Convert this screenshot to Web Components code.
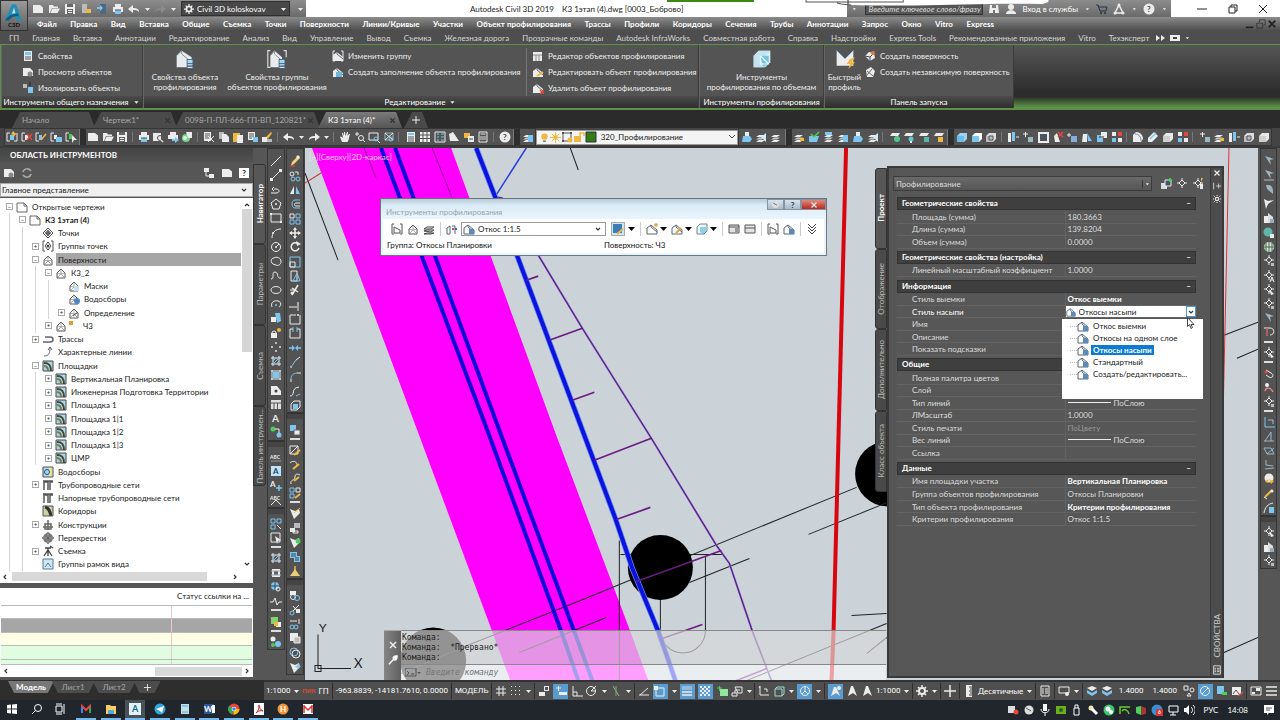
<!DOCTYPE html>
<html lang="ru">
<head>
<meta charset="utf-8">
<title>Autodesk Civil 3D 2019</title>
<style>
html,body{height:100%;margin:0}
body{font:8px/10px Lato,"Noto Sans",sans-serif;color:#eee;background:#2b2b2b;overflow:hidden}
</style>
</head>
<body>
<cad-app></cad-app>
<script>
const W='#ececec',B='#7cc6f0',Y='#f0b840',G='#4ccf5c',R='#e2483c',K='#333',D='#8a8a8a',H='#9fb4c0';
const s=(d,c=W,w=1)=>`<path d="${d}" fill="none" stroke="${c}" stroke-width="${w}"/>`;
const f=(d,c=W)=>`<path d="${d}" fill="${c}"/>`;
const o=(x,y,r,c=W)=>`<circle cx="${x}" cy="${y}" r="${r}" fill="${c}"/>`;
const oc=(x,y,r,c=W,w=1)=>`<circle cx="${x}" cy="${y}" r="${r}" fill="none" stroke="${c}" stroke-width="${w}"/>`;
const t=(x,y,z,v,c=W)=>`<text x="${x}" y="${y}" font-size="${z}" font-weight="700" fill="${c}" font-family="Lato,sans-serif">${v}</text>`;
const layer=f('M1 6l3-2h6L7 6z')+f('M1 8.500l3-2h6l-3 2z','#c9c9c9')+f('M1 11l3-2h6l-3 2z');
const sheet=f('M3 2h8L9 5H1z');
const slope=c=>f('M1 5l4-3 6 5v4H1z',c)+s('M5 2v2l6 5','#667',1);
const br=(c=W)=>s('M3 1H1v10h2M9 1h2v10H9',c);
const surf=s('M2 6l4-4 4 4v5H2z','#555')+s('M6 2v5M2 11l4-4 4 4M2 6l4 1 4-1','#888',.7);
const site=f('M1 1h10v10H1z','#a9d8e6')+s('M1 1h10v10H1z','#444')+s('M2 3c5 0 7 2 7 8','#443',2)+s('M2 6c3 0 4 2 4 5','#775',2);
const cube=(a,b)=>f('M1 5l3-3h7v6l-3 3H1z',a)+f('M1 5h7v6H1z',b);
const snap=f('M2 1l6 9-1-5 4-1z',H);
const osn=s('M6 2l3 3-3 3-3-3z',W)+s('M6 0v2M6 8v2M1 5h2M9 5h2');
const ICON={
new:f('M1 2h7l3 2.500V10H1z'),open:f('M1 2h4l1 1.500h4V5H4L2 10H1z')+f('M4.500 5.500H12L9.500 10H2.500z'),
save:f('M1 1h10v10H1z')+f('M3 1h6v3H3zM3 6h6v5H3z','#666')+f('M4 7h4v1H4zM4 9h4v1H4z'),
open2:f('M2 1h5v9H2z','#bbb')+f('M6 6h5v4H6z',Y),phone:f('M4 1h6v10H4z','#4f6a80')+f('M1 4h3V2l3 3-3 3V6H1z',B),
print:f('M3 1h6v3H3zM1 4h10v5H1z')+f('M3 7h6v4H3z',B)+s('M3 7h6','#555'),
print2:f('M3 1h6v3H3zM1 4h10v4H1z')+f('M5 8h3V6l4 3-4 3v-2H5z',B),
preview:f('M1 2h8v8H1z')+oc(8,7,2.500,'#555')+s('M9 9l2 2','#ddd',1.500),globe:o(5,7,4,'#7bd28b')+f('M5 1h6v6H7z')+o(4,7,2,'#d9f2df'),
cut:f('M1 1h7v9H1z')+s('M2 3h5M2 5h5M2 7h4','#555')+s('M5 5l6 6M11 5l-6 6'),copy:f('M1 1h5v7H1z','#bbb')+f('M4 3h4l3 3v5H4z'),
paste:f('M1 2h7v9H1z',Y)+f('M5 4h6v8H5z'),props:f('M1 1h7v8H1z')+s('M2 3h5M2 5h5M2 7h3','#555')+f('M6 6h5v5H6z',B),
match:f('M5 6l5-5 1 1-4 6z',Y)+f('M1 6h5v5H1z')+f('M6 8h5v3H6z','#bbb'),
undo:f('M0 6l5-4v3c4 0 6 1 6 4-2-2-4-2-6-2v3z'),redo:f('M12 6L7 2v3C3 5 1 6 1 9c2-2 4-2 6-2v3z'),
redo0:f('M12 6L7 2v3C3 5 1 6 1 9c2-2 4-2 6-2v3z',D),
dd:f('M4 5h5L6.500 8z'),ddk:f('M3 4h7L6.500 8z','#000'),
hand:f('M3 11L1 6l1-.5L4 7 3 2h1l1 3V1h1l.5 4L8 1h1L8.500 5 10 3h1L9.500 9l-1 2z'),
zoom:oc(7,7,2.500)+s('M9 9l2 2')+s('M1 3h4M3 1v4'),zwin:s('M1 2h9v7H1z',W,1)+oc(8,8,2,B)+s('M9.500 9.500L12 12',W),
zext:s('M2 2h8v7H2z',H)+s('M2 9l8-7M2 2l8 7')+oc(8,8,2,B),
calc:f('M2 1h8v10H2z')+f('M3 2h6v2H3z',B)+s('M3 6h6M3 8h6M3 10h6','#555',1),calc2:s('M2 1h8v10H2z')+s('M3.500 3h5M3 6h6M3 8h6','#ddd'),
grid:f('M1 1h10v10H1z')+s('M1 4h10M1 7.500h10M4 1v10M8 1v10','#555'),
dash:s('M1 1h10v10H1z')+s('M3 3h2M3 6h2M3 9h2M7 3h3M7 6h3M7 9h3',B),
tag:f('M1 3l4-2 6 9H2z'),lockp:f('M1 2h6v5H1z',Y)+f('M5 5h6v6H5z')+s('M6 8h4','#555'),
help:o(6,6,5.500)+t(4,9,8,'?','#444'),
p1:s('M1 2h3M1 2v8h3M11 2v8H8')+f('M4 4h4v5H4z',B)+f('M7 0l2 2 2 1-2 1-1 2-1-2-2-1 1-1z',Y),
p2:s('M1 2h3M1 2v8h3')+f('M4 4h3v5H4z')+s('M6 3l5 6M11 3L6 9',R,1.500),
p3:s('M1 2h3M1 2v8h3')+f('M4 4h3v5H4z',B)+s('M6 9l5-6',Y,1.500),
p4:s('M1 2h3M1 2v8h3')+f('M4 4h3v4H4z')+f('M6 6h6v5H6z',B),
p5:s('M1 2h3M1 2v8h3')+f('M4 3h3v5H4z',G)+f('M7 4l5 5H9l-2 3z'),
lay:layer,layb:layer+f('M6 4h5v7H6z',B),laym:layer+f('M2 1h7v3H2z',B),layr:layer+f('M6 6l5-4v9z','#cfe9f8'),
layu:f('M2 5h7l2 3-2 3H1z',B)+f('M4 1h4v4H4z',W),layy:layer+f('M7 7h4v3H7z',Y),layg:f('M1 5h10l-2 6H1z',B)+s('M3 3l3 3 5-5',G,1.500),
l1:sheet+o(8,8,3,'#58c48d'),l2:sheet+o(8,8,2.500,'#5ec9d4')+f('M7 10h2v2H7z'),l3:sheet+f('M6 6h5v5H6z','#58b8a0'),l4:sheet+f('M5 6h5v5H5z',Y),
bulb:o(6,5,3.500,Y)+f('M4.500 9h3v2h-3z','#888'),sun:o(6,6,2.500,Y)+s('M6 0v12M0 6h12M2 2l8 8M10 2l-8 8',Y),
frz:s('M2 2h8v8H2z','#555')+f('M1 1h2v2H1zM9 1h2v2H9zM1 9h2v2H1z','#555')+o(9,9,2.500,Y),lck:f('M1 5h7v6H1z',Y)+s('M7 5V2h4v3',Y,1.500),
grn:f('M1 1h10v10H1z','#357a12')+s('M1 1h10v10H1z','#234'),
cb:cube('#9ad4f4','#6ebcea'),cw:cube('#fff','#7cc6f0'),cg:cube('#ddd','#bbb')+s('M4 5h4v4H4z','#556'),cgb:cube('#e8e8e8','#cfcfcf'),
c1:f('M1 2h3v9H1z')+f('M5 1h3v9H5z',B)+s('M9 6h3',W),c2:s('M1 3h5M3.500 1v5')+f('M6 6h5v5H6z','#9bb'),
c3:s('M2 2h9v9H2z',W,2)+f('M4 4h5v5H4z','#456'),c4:f('M2 5l3-3 3 9H3z')+s('M6 1l5 5M11 1L6 6',R,1.500),c5:s('M1 4h4M3 2v4')+f('M5 5h6v6H5z','#8ad'),
c6:f('M2 3h4v8H1z')+f('M6 2l5 8H7z',B),c7:f('M1 4h6v7H1z',B)+f('M5 1h6v6H5z')+s('M3 6h5',K),c8:f('M1 1h4v4H1zM7 7h4v4H7z')+f('M7 1h4v4H7z',R)+f('M1 7h4v4H1z',B),
fil:f('M1 4l3-3c4 0 7 3 7 7l-2 3H1z')+s('M3 3c4 0 6 3 6 7','#789'),cha:f('M1 7l6-6 4 4-6 6H1z')+s('M3 8l6-6',B,1.500),
line:s('M1 11L11 1'),dline:s('M2 10L10 2')+f('M0 9h3v3H0zM9 0h3v3H9z'),pline:s('M1 9h5c4 0 4-4 0-4H4M2 5l2-2M2 5l2 2'),
pent:s('M6 1l5 4-2 6H3L1 5z')+o(6,6,1),rect:s('M1 2h10v8H1z')+f('M0 1h2v2H0zM10 9h2v2h-2z'),arc:s('M2 11C2 6 5 2 11 2')+o(3,6,1),
circ:oc(6,6,4.500)+s('M6 6l3-3')+o(6,6,1),cloud:s('M3 9C0 7 1 3 4 3c2-2 7 0 7 3 0 4-3 5-5 4z'),spl:s('M1 10c4 0 0-7 4-7s1 7 6 6'),ell:`<ellipse cx="6" cy="6" rx="5" ry="3.500" fill="none" stroke="${W}"/>`,
earc:s('M2 9C0 4 5 2 8 3c4 1 3 5 1 6')+o(6,7,1,B),ins:f('M1 5h5v5H1z')+f('M5 1h5l1 8-4 2z',B),blk:f('M1 6h6v5H1z')+oc(4,6,2)+o(9,3,2,Y),
dots:f('M5 1h2v2H5zM1 5h2v2H1zM9 5h2v2H9zM5 9h2v2H5z','#bbb'),hat:s('M1 3h10M1 9h10M3 1v10M9 1v10')+s('M3 9l6-6M3 6l3-3M6 9l3-3',B),
grad:f('M3 3h6v6H3z',B)+s('M1 2h10M1 10h10M2 1v10M10 1v10'),reg:f('M1 2h6l4 5v4H1z')+o(6,7,1.500,'#444'),tab:f('M1 2h10v9H1z','#ddd')+s('M1 5h10M4 5v6M7.500 5v6','#555'),
A:t(2,10,10,'A'),addp:o(3,3,2.500,G)+o(9,9,2.500,B)+s('M5 3h4v4'),
abc:t(0,8,5,'ABC')+s('M1 10h10','#999'),Ab:f('M1 1h10v10H1z','#bfe3f7')+t(3,9,8,'A','#246'),Ap:t(0,8,8,'A')+s('M9 6v6M6 9h6',B,1.500),abc2:t(0,6,5,'ABC')+s('M1 11l5-5 5 5'),
era:f('M2 11l1-4 6-6 2 2-6 6z','#f4d27a')+f('M7 2l2 2 2-2-2-2z')+s('M1 11h5',R),cpo:oc(3,4,2)+oc(4,9,2,B)+oc(9,9,2,B)+s('M6 2h3v3'),
mir:f('M5 2v8H1z')+f('M7 2v8h4z',B),off:s('M11 2H6C2 2 2 10 6 10h5',B)+s('M11 5H7C5 5 5 8 7 8h4'),arr:s('M1 1h4v4H1z',W)+s('M7 1h4v4H7zM1 7h4v4H1z',B)+s('M7 7h4v4H7z',B),
mov:s('M6 1v10M1 6h10',W,1.500)+f('M4 3l2-3 2 3zM4 9l2 3 2-3zM3 4L0 6l3 2zM9 4l3 2-3 2z'),rot:s('M9 3A4 4 0 1 0 10 7',W,1.500)+f('M7 0l5 3-4 2z'),
sca:s('M1 1h10v10H1z',B)+s('M1 6h5v5H1z'),str:s('M2 1h6v10H2z')+s('M4 11L8 3l3 8z',B),trim:s('M3 11L9 1M3 4l6 4',W,1.500)+o(3,9,1.500)+s('M1 6h5',W),ext:s('M0 8h8M9 3v9')+s('M9 3v3','#7cc6f0'),
brk:s('M7 2H1v9h10V2')+o(9,2,1),brk2:s('M4 2H1v9h10V2H8')+s('M4 0v5M8 0v5',B),joi:s('M0 6h5M7 6h5',B,1.500)+f('M3 3l3 3-3 3zM9 3L6 6l3 3z',B),
chf:s('M1 11h2')+s('M2 11l5-7',B)+s('M7 4l4-3'),flt:s('M2 11V8')+s('M2 8c0-4 3-6 6-6',B)+s('M8 2h4'),bld:s('M1 11c6 0 0-8 9-9')+s('M7 11l4-2',B),exp:s('M2 5l3-3h6v6l-3 3H2z',W)+f('M4 5h5v5H4z',B),
ord:f('M1 1h6v6H1z',B)+f('M5 6h6v5H5z')+s('M5 6h6v5H5z','#666'),eh:s('M1 2h8v8H1zM1 10l8-8')+s('M5 11l6-5',Y,2),ep:s('M1 5c4-4 9 0 6 4')+s('M4 11l6-5',Y,2),es:s('M2 11C1 6 6 8 6 4s3-3 5-2')+s('M5 8l5-4',Y,2),ea:s('M1 1h4v4H1zM1 7h4v4H1z',B)+s('M7 1h4v4H7z')+s('M6 11l5-4',Y,2),
tg:f('M1 2l5 2 4-2 1 4-6 6z')+s('M5 6l6-5',Y),tgg:f('M1 2l5 2 4-2 1 4-6 6z')+o(9,5,2.500,G),tgb:f('M1 2l5 2 4-2 1 4-6 6z')+s('M9 3v5M6.500 5.500h5',B,1.500),
blo:f('M1 6h5v4H1z')+f('M5 1h6v5H5z','#bbb')+s('M4 9h5v2H4z'),syn:f('M1 1h7v6H1z',B)+f('M5 5h6v6H5z',B)+s('M2 3h5M2 5h5M6 7h4M6 9h4','#345'),brm:s('M6 1v5',Y,1.500)+f('M6 4l5 7H1z','#e8cd7a'),
lnk:f('M1 2h6v4H1z')+oc(4,8,2.500)+oc(8,9,2.500,B),lnc:oc(3,9,2,B)+s('M4 7l6-6M4 2l5 6')+f('M7 5h4v4H7z'),par:s('M1 3h7M10 1v5')+oc(3,9,2,B)+oc(7,9,2,B),pas:f('M1 1h8v8H1z')+f('M5 5h6v6H5z','#bbb')+s('M5 5h6v6H5z'),web:oc(5,5,4,B)+oc(7,7,4),
sel:s('M1 1h9v9H1z',W)+f('M5 4l6 4-3 1-1 3z'),gr2:s('M1 1h4v4H1zM7 1h4v4H7zM1 7h4v4H1z',B)+s('M7 7l4 4'),chip:f('M2 2h8v8H2z')+f('M4 4h4v4H4z','#567')+s('M1 4h10M1 8h10','#aaa'),mapz:o(5,5,4,B)+s('M1 5h8M5 1v8','#345')+oc(8,8,2),pul:s('M0 7h3l2-4 2 7 2-3h3'),gsq:f('M1 1h7v7H1z','#7fd36a')+f('M6 6h5v5H6z')+f('M4 6h4v4H4z',Y),dotc:o(3,3,2.500)+o(8,8,3,B)+o(3,9,2,G),
sn1:snap,sn2:snap+s('M1 11h10','#bbb'),sn3:f('M3 1h3c4 1 4 5 4 9L4 5z',H),sn4:f('M1 1l4 2 6-1-6 4-2 5z'),bld1:f('M1 4h5v7H1z')+f('M5 1l5 4v6H5z','#ddd')+f('M7 7h4v4H7z','#9ab'),sph:o(5,5,4.500,'#5fb6a8')+f('M7 7h4v4H7z'),gl:o(6,6,5,'#d9e6c6')+s('M1 6h10M6 1v10M3 2v8M9 2v8','#466'),
os:osn+f('M8 8h3v3H8z','#bbb'),osa:osn+s('M7 12l2-5 2 5M8 10h2'),osk:osn+f('M6 5l5 5-3 1z'),pkr:s('M1 1h6c5 0 5 7 0 7')+s('M4 1v8','#c66',1.500),mag:s('M3 3l5 3c4 2 1 6-2 4L3 8')+o(3,5,1.500,R),mag2:o(4,3,2)+s('M2 9c1-4 6-4 8 1','#d88',1.500),
ax:s('M2 1v10h10',B)+s('M5 4h5v4','#9bd'),ax2:s('M2 11L8 2M1 11h10',H)+s('M8 2v9','#9bd'),hb:s('M1 3h7l3 6H4z',H)+s('M4 9l7-6',B),dl:s('M3 1v5l7 1M2 10l9-1',H),ball:o(6,5,4.500)+f('M6 6l5 2-3 3z',Y)+o(4,8,1.500,Y),wr:s('M2 9l7-7',Y,2)+o(9,3,1.500)+s('M1 9l3 2'),arcb:s('M1 11C2 5 5 2 10 1')+f('M6 5h5v6H6z',B),
prj:f('M2 1h8v10H2z')+f('M3 2h6v3H3z',B)+s('M3 7h6M3 9h6','#555'),vie:f('M1 2h7l3 3v5H1z')+o(8,8,2.500,'#888'),iso:f('M1 2h4v4H1z','#bbb')+f('M6 5h5v6H6z',B)+s('M8 0v4',K,1.500),
G1:f('M1 4l3-3 6 4v6H1z','#e9ecee')+s('M1 4l3-3v2l6 5','#8a949c',.6)+f('M7 6h4v6H7z','#3f607c')+f('M7.500 6.500h3v2h-3z','#a8d8f0')+s('M7.500 9.500h3M7.500 11h3','#fff',.6),
G2:s('M2 1H0.500v10H2M10 1h1.500v4','#ddd',.7)+f('M2 4l2.500-3L9 5v6H2z','#e9ecee')+s('M2 4l2.500-3v2L9 7','#8a949c',.6)+f('M7 6h4v6H7z','#3f607c')+f('M7.500 6.500h3v2h-3z','#a8d8f0')+s('M7.500 9.500h3M7.500 11h3','#fff',.6),
cub:f('M1 4l3-3h7v7l-3 3H1z','#d9eef5')+f('M1 4l3-3h7l-4 4 0 6H1z','#c3e4ee')+f('M5 4h5v5L7 11z','#74c3e0')+s('M5 4l5 5M5 4v5h5','#e9f7fc',.7),
prf:f('M1 1l5 5 5-5v9H1z')+s('M1 1l5 5 5-5','#9bc7da',.6)+f('M9 6l3-1-2 3h2l-4 4 1-3H7z',Y),gb:br()+slope(W),gfill:slope(W)+f('M4 6h6v5H4z','#6fb7df'),
ged:f('M1 2h9v9H1z')+s('M1 5h9M4 5v6M7 5v6','#888'),gp:slope(W)+s('M5 10l6-4',Y,2),gx:slope(W)+s('M8 8l4 4M12 8l-4 4',R,1.500),
sf:f('M1 6l4-4 5 1 1 5-5 3z')+s('M1 6l5 1 4-4M6 7v4','#444')+o(9,3,2,'#e8743a'),sf2:f('M2 4l5-3 4 4-2 6H3z')+s('M3 5l6 5M8 3L3 9','#666'),
chev:f('M1 3l4 3-4 3zM6 3l4 3-4 3z'),cam:f('M1 3h10v6H1z')+f('M4 5h4v2H4z','#444'),
gear:oc(6,6,3,W,2)+s('M6 0v3M6 9v3M0 6h3M9 6h3M2 2l2 2M8 8l2 2M10 2L8 4M4 8l-2 2',W,1.500),
bin:f('M2 2h2v3h4V2h2l1 8H7V7H5v3H1z'),usr:o(6,4,3)+f('M1 11c0-5 10-5 10 0z'),cart:s('M0 2h2l2 6h6l1-4H3','#234')+o(5,10,1,'#234')+o(9,10,1,'#234'),tri:s('M6 2l4 8H2z',W,1.500)+o(6,2,1.500)+o(2,10,1.500)+o(10,10,1.500),
mn:s('M1 6h10','#222'),mx:s('M2 4h6v6H2zM4 4V2h6v6H8','#222'),cl:s('M2 2l8 8M10 2l-8 8','#222'),
mnw:s('M1 10h9','#222',2),mxw:s('M1 5h7v6H1zM4 4V1h7v6H9',K),clk:s('M2 2l8 8M10 2l-8 8','#222',2),x:s('M3 3l6 6M9 3l-6 6',W,1.500),xd:s('M3 3l6 6M9 3l-6 6','#333',1.500),
pin:s('M2 2v8M5 6h6M8 3v6','#ddd'),set:oc(6,6,2,'#ddd',1.500)+s('M2 2l2 2M10 2L8 4M2 10l2-2M10 10L8 8M2 5v2M10 5v2M5 2h2M5 10h2','#ccc'),
pg:f('M1 2h7l3 3v6H1z','#fff')+s('M1 2h7l3 3v6H1zM8 2v3h3','#666'),pt:s('M6 1l5 5-5 5-5-5z','#555')+s('M6 3v6M3 6h6','#333')+oc(6,6,2,'#555'),ptg:br('#555')+s('M6 2l3 4-3 4-3-4z','#555')+o(6,6,1.500,'#444'),
srf:surf,msk:surf+f('M6 6h5v5H6z','#c6e2ee'),wsh:surf+o(9,8,3,'#4a86c8'),def:surf+s('M5 9l5-4','#555'),trs:s('M1 9h7c4 0 4-5 0-5H3','#667',1.500),chl:s('M2 10c5 0 6-3 6-8M6 4l2-3 2 3','#666'),ste:site,
wat:f('M1 1h10v10H1z','#e8e0a0')+f('M1 1h6v10H1z','#a9d8ee')+s('M1 1h10v10H1z','#555')+oc(5,6,2.500,'#357'),pip:s('M2 11V3h4v8M8 11V3h3M1 2h10','#555',1.500),cor:f('M1 1h10v10H1z','#cfcf9f')+s('M3 2c4 1 5 4 6 9','#333',3)+s('M1 1h10v10H1z','#555'),
asm:s('M1 8h10M6 1v10M3 5h6v5H3z','#666',1.500),crs:o(6,6,5,'#777')+s('M6 0v12M0 6h12','#ddd',2)+s('M6 0v12M0 6h12','#333'),svy:s('M2 11l4-6 4 6M3 3h6M6 3v8M8 1l3 2','#444',1.300),vfr:f('M1 1h10v10H1z','#cfeaf5')+s('M1 1h10v10H1zM3 9l3-4 3 4','#579'),
ref:s('M2 5c1-4 6-4 8-1M10 7c-1 4-6 4-8 1','#aaa',1.500),hie:f('M1 1h5v4H1zM6 7h5v4H6z')+s('M3 5v4h3'),
bsl:slope('#fff')+s('M1 5l4-3 6 5v4H1z','#567')+f('M6 6h5v5H6z','#5b8cb8'),bgr:br('#555')+s('M3 4l6 3v3H3z','#555'),bly:s('M1 6l3-2h7l-3 2zM1 8l3-1h7l-3 2zM1 11l3-1h7l-3 1z','#444'),bst:s('M1 5l3-2v8H1zM6 3h3v8','#567')+f('M6 5h2v2H6z',R)+f('M9 5h2v2H9z','#36c'),
bcr:slope('#fff')+s('M1 5l4-3 6 5v4H1z','#567')+o(10,2,1.800,'#e8a03a'),bed:slope('#fff')+s('M1 5l4-3 6 5v4H1z','#567')+s('M5 10l5-5','#d9a63a',2),bsel:f('M1 1h9v9H1z','#3c7fb6')+s('M5 11l6-5',Y,2),
bcub:f('M1 4l3-3h7v7l-3 3H1z','#eef6f9')+f('M4 4h6v5l-3 2-3-2z','#8fd0e8')+s('M1 4l3-3h7v7l-3 3H1z','#567',.8),
bta:f('M1 2h10v8H1z','#e4e4e4')+s('M1 2h10v8H1zM1 4h10','#555')+f('M7 5h3v4H7z','#999'),btb:f('M1 2h10v8H1z','#e4e4e4')+s('M1 2h10v8H1zM1 5h10','#555'),bcol:s('M2 1l4 4 4-4M2 4l4 4 4-4M2 7l4 4 4-4','#444'),
qs:f('M1 5h6v6H1z','#ddd')+f('M5 2h6v6H5z','#456')+s('M5 2h6v6H5z')+s('M10 0v4M8 2h4',G,1.500),qa:osn,qf:osn+f('M8 6h3v5H8z')+f('M9 0h2L9 4z',Y),
msn:f('M6 1h5v5H6zM1 7h6v4H1z')+f('M7 2h3v3H7z','#555'),dyn:s('M1 3h5M3.500 1v5')+f('M4 7h8v3H4z'),ort:s('M2 1v10h10M2 7h4v4'),pol:oc(5,6,4.500)+s('M5 6h4M5 6l5-5'),iso2:s('M3 1l6 10','#9a9')+s('M6 1v10','#7a7'),otr:s('M2 10l8-7M1 10h10'),osnp:s('M2 3h8v8H2z')+f('M0 1h4v4H0z',W),lw:s('M1 2h10M1 4h10',W,.8)+s('M1 7h10M1 10h10',W,1.500),
trn:f('M1 1h10v10H1z')+f('M3 1h2v2H3zM7 1h2v2H7zM1 3h2v2H1zM5 3h2v2H5zM9 3h2v2H9zM3 5h2v2H3zM7 5h2v2H7zM1 7h2v2H1zM5 7h2v2H5zM9 7h2v2H9zM3 9h2v2H3zM7 9h2v2H7z','#5a9bd0'),selc:f('M4 4h8v7H4z','#8ee6a0')+s('M1 3h5M3.500 1v5',G),sc3:s('M4 2h7v6H7zM1 8h5v3H1zM4 8V5h5'),
ducs:s('M2 1v9h9M2 1L1 3M6 4h3v3'),fltr:s('M2 4l2-2h7v7l-2 2H2zM2 4h7v7','#9fd8d0'),giz:oc(6,6,4.500)+s('M6 2v4l3 3M6 6L3 9'),ann:f('M5 1h2l4 10-4-3-5 3z'),anp:f('M4 2h2l4 9-4-3-5 3z')+o(9,3,2),
gdots:f('M1 1h1v1H1zM5 1h1v1H5zM9 1h1v1H9zM1 5h1v1H1zM5 5h1v1H5zM9 5h1v1H9zM1 9h1v1H1zM5 9h1v1H5zM9 9h1v1H9z','#fff'),gline:s('M4 1v10M8 1v10M1 4h10M1 8h10'),
plus:s('M6 0v12M0 6h12',W,1.500),rul:f('M3 0h6v12H3z')+s('M6 2h3M7 4h2M6 6h3M7 8h2M6 10h3','#444'),qp:s('M2 1h8v10H2z')+s('M3 4h2M3 6h2M3 8h2M6 4h3M6 6h3M6 8h3'),lkui:s('M1 2h10v6H1z')+o(9,9,2),el:f('M1 3l5-2 5 2-5 3z')+f('M1 5l5 3 5-3v3l-5 3-5-3z',B),iso3:s('M1 1h4v4H1z')+oc(9,5,2)+s('M4 11l2-3 2 3z'),hw:oc(6,6,4.500)+s('M3 9l6-6'),gs:f('M1 1h7v8H1z',B)+f('M6 7h5v3H6z',G),pic:f('M1 2h9v8H1z')+s('M2 9l3-4 3 4','#555')+s('M7 11l5-4',R,1.500),full:s('M1 2h10v8H1z')+f('M6 3h4v3H6zM2 7h3v2H2z'),burg:s('M1 2h11M1 6h11M1 10h11',W,1.500),
win:f('M1 2l4-.5V5.500H1zM6 1.400L11 1v4.500H6zM1 6.500h4v4L1 10zM6 6.500h5V11l-5-.5z','#fff'),mgl:oc(7,5,3.500,'#fff')+s('M4.500 7.500L1 11','#fff'),tv:s('M1 3h6v6H1zM9 1v10M1 1h6M1 11h6','#fff'),gm:s('M2 10V3l4 4 4-4v7','#ea4335',2)+s('M2 10V4','#4285f4',2)+s('M10 10V4','#34a853',2),fld:f('M1 2h4l1 1h5v8H1z','#f5cf62')+f('M3 7h6v4H3z','#5aa7dc'),acad:f('M0 0h12v12H0z','#e4f1f6')+t(3,9,9,'A','#0d6c8c'),
tgm:o(6,6,5.500,'#2fa5de')+f('M2 6l8-3-2 7-2-2z','#fff'),pc:f('M2 1h8v10H2z','#bfe0f2')+s('M3 3h6M3 9h6','#6aa'),wrd:f('M1 1h10v10H1z','#2b579a')+t(1,9,8,'W','#fff')+f('M9 2h3v8H9z','#fff'),chr:o(6,6,5.500,'#e8453c')+f('M6 6L1 3a5.500 5.500 0 0 0 3 8.500z','#34a853')+f('M6 6h5.500a5.500 5.500 0 0 1-6 5.500z','#fbbc05')+o(6,6,2.300,'#fff')+o(6,6,1.800,'#4285f4'),pdf:f('M1 0h10v12H1z','#fff')+s('M3 10c3-3 3-5 3-8 0 3 2 5 4 6-3-1-5 0-7 2','#c8232c'),hrt:o(6,6,5.500,'#e9963c')+t(3,9,8,'H','#fff'),ml:f('M1 1h10v10H1z','#fff')+s('M2 3l4 4 4-4M2 2v8M10 2v8','#d33',1.500),
tr1:f('M1 2h7v7H1z','#ddd')+o(9,8,2.500,R),tr2:o(6,6,4.500,'#ddd')+s('M3 4l5 3','#555'),mic:f('M4 0h4v7H4z','#fff')+s('M2 5c0 5 8 5 8 0M6 9v3','#fff'),nv:f('M1 2h10v8H1z','#6fae1b')+o(6,6,2,'#263'),usb:s('M3 4h5v7H3zM4 4V1h3v3','#fff'),key:o(4,4,2.500,'#f4e6b0')+s('M5 5l5 5','#fff',3),wa:o(6,6,5.500,'#3bc76b')+o(5,5,2.500,'#fff')+o(8,8,2,'#fff'),nv2:s('M1 10V3h10M3 7c2-3 6-1 7 3','#6c3',1.500),cub2:f('M1 3l5-1v9L1 9z',G)+f('M6 2l5 2v6l-5 1z','#a33'),six:o(6,6,5.500,'#3a8fd0')+f('M5 5h7v7H5z','#d33')+t(7,10,5,'6','#fff'),mon:s('M2 2h9v6H2zM6 8v3M3 11h6','#fff'),vol:f('M1 4h2l3-3v10L3 8H1z','#fff')+s('M8 3c2 2 2 4 0 6M10 1c3 3 3 7 0 10','#fff'),ntf:f('M1 1h10v8H6l-2 2V9H1z','#fff')+s('M3 4h6M3 6h4','#555')
};
const reg=(name,css,html)=>customElements.define(name,class extends HTMLElement{
  constructor(){super();this.attachShadow({mode:'open'}).innerHTML=`<style>*,*::before{box-sizing:border-box}button,select,input{font:inherit;color:inherit;background:none;border:0;padding:0;margin:0;border-radius:0;appearance:none;outline:0;text-align:left;white-space:nowrap}a{color:inherit;text-decoration:none;white-space:nowrap}button{display:flex;align-items:center;justify-content:center}${css}</style>${html}`}
});
customElements.define('ui-icon',class extends HTMLElement{
  connectedCallback(){if(this.shadowRoot)return;this.attachShadow({mode:'open'}).innerHTML=`<style>:host{display:block;flex:none;width:var(--s,12px);height:var(--s,12px)}svg{display:block;width:100%;height:100%}</style><svg viewBox="0 0 12 12" aria-hidden="true">${ICON[this.getAttribute('name')]||''}</svg>`}
});
const ic=(n,z)=>`<ui-icon name="${n}"${z?` style="--s:${z}px"`:''}></ui-icon>`;
const ib=(n,c='')=>`<button class="${c}" aria-label="${n}">${ic(n)}</button>`;

/* A strip of tool groups: "|" is a rule, "/" starts a new docked toolbar. */
customElements.define('tool-strip',class extends HTMLElement{
  connectedCallback(){
    if(this.shadowRoot)return;
    const html=this.getAttribute('icons').trim().split(/\s+/).map(n=>n==='|'?'<i></i>':n==='/'?'<b></b>':n==='dd'?`<button class="dd" aria-label="dd">${ic('dd')}</button>`:ib(n)).join('');
    this.attachShadow({mode:'open'}).innerHTML=`<style>:host{display:flex;box-sizing:border-box;min-width:0;min-height:0;background:#535353;border:1px solid #363636}
    :host([vertical]){flex-direction:column;padding:5px 0 0}
    button{all:unset;flex:10 1 0;min-width:0;min-height:0;display:flex;align-items:center;justify-content:center}.dd{flex-grow:7}
    i,b{box-sizing:border-box}i{flex:0 0 5px;border-left:1px solid #777;margin:3px 0 3px 2px}b{flex:0 0 7px;background:#2e2e2e;border-left:1px solid #777;margin-left:1px}
    :host([vertical]) i{flex-basis:2px;margin:1px 3px 3px;border:0;background:#ddd}:host([vertical]) b{flex-basis:7px;margin:0 0 3px;border:0;border-top:2px solid #333;background:#444}</style>${html}`;
  }
});

reg('title-bar',`:host{display:flex;height:17px;align-items:stretch;background:#fff;color:#222;position:relative;overflow:hidden}
.quick{display:flex;align-items:center;background:linear-gradient(#8d8d8d,#6a6a6a);color:#fff;flex:0 0 278px;gap:4px;padding-left:4px}
.quick .dd{margin:0 -3px}
.ws{display:flex;align-items:center;gap:3px;flex:1;height:15px;background:#484848;border:1px solid #2f2f2f;padding-left:2px;margin-left:1px}
.ws select{flex:1;color:#fff}
.name{flex:1;text-align:center;align-self:center;white-space:pre}
.info{flex:0 0 298px;display:flex;align-items:center;gap:5px;background:linear-gradient(#8d8d8d,#6a6a6a);color:#fff;padding:0 3px}
.info input{width:118px;height:12px;background:#555;border:1px solid #333;padding-left:2px;color:#ddd;font-style:italic;margin-left:2px}
.win{flex:0 0 109px;display:flex;align-items:center;justify-content:space-between;padding:0 11px 0 25px}
.cover{position:absolute;left:60%;top:0;width:24%;height:7px}
.strip{position:absolute;left:51%;top:0;width:7%;height:2px;background:#3d8a12}`,
`<div class="quick">${['new','open','save','open2','phone','print','undo'].map(n=>ib(n)).join('')}${ib('dd','dd')}${ib('redo0')}${ib('dd','dd')}
<label class="ws">${ic('gear',10)}<select aria-label="Рабочее пространство"><option>Civil 3D koloskovav</option></select>${ic('dd')}</label>${ic('dd')}</div>
<div class="name">Autodesk Civil 3D 2019    К3 1этап (4).dwg [0003_Боброво]</div>
<div class="info">${ic('dd',8)}<input aria-label="Поиск" value="Введите ключевое слово/фразу">${ib('bin')}${ib('usr')}<button>Вход в службы</button>${ic('dd',8)}${ib('cart')}${ib('tri')}${ic('dd',8)}${ib('help')}${ic('dd',8)}</div>
<div class="win">${ib('mn')}${ib('mx')}${ib('cl')}</div>
<i class="strip"></i><svg class="cover" viewBox="0 0 300 7" preserveAspectRatio="none"><path d="M70 0H269v2l-6 2c-80-1-120 3-193 1z" fill="#fff"/><path d="M27 0v2h97V0M58 3l4 1 10 1" fill="none" stroke="#555"/></svg>`);

reg('menu-bar',`:host{display:flex;height:14px;align-items:center;background:linear-gradient(#8b8b8b,#4b4b4b);color:#fff;font-weight:700;padding:0 3px 0 9px}
nav{flex:954;display:flex;justify-content:space-between}.sp{flex:250}.w{display:flex;gap:1px;flex:none}`,
`<nav>${'Файл,Правка,Вид,Вставка,Общие,Съемка,Точки,Поверхности,Линии/Кривые,Участки,Объект профилирования,Трассы,Профили,Коридоры,Сечения,Трубы,Аннотации,Запрос,Окно,Vitro,Express'.split(',').map(x=>`<a href="#">${x}</a>`).join('')}</nav><span class="sp"></span><div class="w">${ic('mnw',10)}${ic('mxw',10)}${ic('clk',10)}</div>`);

const small=(i,x)=>`<button class="s">${ic(i)}<span>${x}</span></button>`;
reg('cad-ribbon',`:host{display:block}
nav{display:flex;align-items:center;height:13px;background:#4e4e4e;color:#d6d6d6;padding-left:9px}
nav div{flex:1145;display:flex;justify-content:space-between}nav span{flex:126;display:flex;align-items:center;gap:2px;padding-left:5px}
.body{display:flex;height:66px;border:1px solid #5f8f4a;border-width:1px 0 2px 1px;background:linear-gradient(#565656,#2c2c2c 75%,#2c2c2c 82%,#5f9a48)}
section{display:flex;flex-direction:column;background:#545454;border-right:1px solid #3c3c3c;border-left:1px solid #666}
h2{margin:0;font:inherit;color:#fff;flex:0 0 12px;display:flex;align-items:center;justify-content:center;background:linear-gradient(#4c4c4c,#2e2e2e);white-space:nowrap}
.c{flex:1;min-height:0;display:flex;padding-top:3px}.col{display:flex;flex-direction:column}.s{height:16px;flex:none;gap:4px;justify-content:flex-start}
.big{flex-direction:column;justify-content:flex-start;text-align:center;gap:3px;white-space:pre}
.big ui-icon{margin-top:1px}
.p1{flex:0 0 142px}.p1 .col{padding-left:20px}.p2{flex:0 0 556px}.p3{flex:0 0 125px}.p4{flex:0 0 190px}.v{border-left:1px solid #777;padding-left:5px}`,
`<nav><div>${'ГП,Главная,Вставка,Аннотации,Редактирование,Анализ,Вид,Управление,Вывод,Съемка,Железная дорога,Прозрачные команды,Autodesk InfraWorks,Совместная работа,Справка,Надстройки,Express Tools,Рекомендованные приложения,Vitro,Техэксперт'.split(',').map(x=>`<a href="#">${x}</a>`).join('')}</div><span>${ib('chev')}${ib('cam')}${ic('dd',8)}</span></nav>
<div class="body">
<section class="p1"><div class="c"><div class="col">${small('prj','Свойства')}${small('vie','Просмотр объектов')}${small('iso','Изолировать объекты')}</div></div><h2>Инструменты общего назначения&nbsp;${ic('dd',10)}</h2></section>
<section class="p2"><div class="c"><button class="big" style="flex:0 0 82px">${ic('G1',20)}Свойства объекта\nпрофилирования</button><button class="big" style="flex:0 0 102px">${ic('G2',20)}Свойства группы\nобъектов профилирования</button><div class="col" style="flex:1;padding-left:4px">${small('gb','Изменить группу')}${small('gfill','Создать заполнение объекта профилирования')}</div><div class="col v" style="flex:0 0 172px">${small('ged','Редактор объектов профилирования')}${small('gp','Редактировать объект профилирования')}${small('gx','Удалить объект профилирования')}</div></div><h2>Редактирование&nbsp;${ic('dd',10)}</h2></section>
<section class="p3"><div class="c"><button class="big" style="flex:1">${ic('cub',20)}Инструменты\nпрофилирования по объемам</button></div><h2>Инструменты профилирования</h2></section>
<section class="p4"><div class="c"><button class="big" style="flex:0 0 39px">${ic('prf',20)}Быстрый\nпрофиль</button><div class="col">${small('sf','Создать поверхность')}${small('sf2','Создать независимую поверхность')}</div></div><h2>Панель запуска</h2></section>
</div>`);

reg('doc-tabs',`:host{display:flex;height:18px;background:#2b2b2b;padding:2px 0 0 12px;color:#a8a8a8}
button{background:#4a4a4a;clip-path:polygon(8px 0,calc(100% - 6px) 0,100% 100%,0 100%);justify-content:space-between;padding:0 5px 0 10px;margin-right:-2px}
.on{background:linear-gradient(#7a7a7a,#555);color:#fff}.n{padding:0 8px;margin-left:4px}`,
`<button style="flex:0 0 83px"><span>Начало</span></button><button style="flex:0 0 84px"><span>Чертеж1*</span>${ic('xd',9)}</button><button style="flex:0 0 138px"><span>0098-П-ПЛ-666-ГП-ВП_120821*</span>${ic('xd',9)}</button><button class="on" style="flex:0 0 84px"><span>К3 1этап (4)*</span>${ic('xd',9)}</button><button class="n" aria-label="Новый чертеж">${ic('plus',8)}</button>`);

reg('main-tools',`:host{display:flex;height:20px;align-items:center;background:#444;padding:0 8px 0 4px;border-bottom:2px solid #3a3a3a}
tool-strip{height:18px}.a{flex:531 1 0}.b{flex:533 1 0}
label{flex:199 1 0;display:flex;align-items:center;height:15px;background:#f4f4f4;border:1px solid #999;color:#222;padding-left:2px}select{flex:1;padding-left:4px}svg{width:10px}`,
`<tool-strip class="a" icons="p1 p2 p3 p4 p5 / new open save | print preview print2 globe | cut copy paste props match | undo dd redo dd | hand zoom zwin zext | calc grid dash tag lockp calc2 | help / layb"></tool-strip>
<label>${ic('bulb',11)}${ic('sun',11)}${ic('frz')}${ic('lck')}${ic('grn')}<select aria-label="Слой"><option>320_Профилирование</option></select><svg viewBox="0 0 10 6"><path d="M2 1l3 3 3-3" fill="none" stroke="#444"/></svg></label>
<tool-strip class="b" icons="layu layr lay / layy layg laym layb layu layr | l1 l2 l3 l4 / cb cw cg | c1 c2 c3 c4 c5 c6 c7 c8 | fil cha cgb c8 | c2 layy c1 cg cgb"></tool-strip>`);

const T=[[0,'-','pg','Открытые чертежи'],[1,'-','pg','К3 1этап (4)','b'],[2,'','pt','Точки'],[2,'+','ptg','Группы точек'],[2,'-','srf','Поверхности','sel'],[3,'-','srf','К3_2'],[4,'','msk','Маски'],[4,'','wsh','Водосборы'],[4,'+','def','Определение'],[3,'+','srf','Ч3','warn'],[2,'+','trs','Трассы'],[2,'','chl','Характерные линии'],[2,'-','ste','Площадки'],[3,'+','ste','Вертикальная Планировка'],[3,'+','ste','Инженерная Подготовка Территории'],[3,'+','ste','Площадка 1'],[3,'+','ste','Площадка 1|1'],[3,'+','ste','Площадка 1|2'],[3,'+','ste','Площадка 1|3'],[3,'+','ste','ЦМР'],[2,'','wat','Водосборы'],[2,'+','pip','Трубопроводные сети'],[2,'','pip','Напорные трубопроводные сети'],[2,'','cor','Коридоры'],[2,'+','asm','Конструкции'],[2,'','crs','Перекрестки'],[2,'+','svy','Съемка'],[2,'','vfr','Группы рамок вида']];
const ch=(r)=>`<svg width="8" height="8" viewBox="0 0 8 8"><path d="M2 5l2-2 2 2" transform="rotate(${r} 4 4)" fill="none" stroke="#333" stroke-width="1.200"/></svg>`;
reg('tool-space',`:host{display:flex;flex-direction:column;background:#565656;color:#222;padding-bottom:3px}
h1{margin:0;font:700 8px/14px Lato,"Noto Sans",sans-serif;background:linear-gradient(#454545,#505050);color:#fff;padding-left:10px}
.bar{height:21px;display:flex;align-items:center;gap:6px;padding:0 4px 0 3px}.sp{flex:1}
.q{background:#fff;width:10px;height:10px;color:#222;font-weight:700}
label{display:flex;align-items:center;height:14px;background:#f0f0f0;border:1px solid #aaa;padding-right:4px}select{flex:1;padding-left:1px}
.tree{background:#fff;flex:384 1 0;display:flex;flex-direction:column;margin-top:1px}.mid{flex:1;display:flex;min-height:0}
ul{flex:1;margin:0;padding:2px 0 0;list-style:none;display:flex;flex-direction:column}
li{flex:1 1 0;min-height:0;display:flex;align-items:center;gap:2px;padding-left:calc(5px + var(--l)*13px);white-space:nowrap;color:#222;position:relative}
li::before{content:"";position:absolute;left:9px;top:0;bottom:0;width:calc(var(--l)*13px);background:repeating-linear-gradient(90deg,#d6d6d6 0 1px,transparent 1px 13px)}
li>i{width:7px;height:7px;border:1px solid #aaa;background:#fff;font:6px/5px Lato;text-align:center;flex:none;margin:0 1px;position:relative}li>i.n{border-color:transparent;background:none}
li>span{flex:1;padding-left:2px;align-self:stretch;display:flex;align-items:center}.b{font-weight:700}.sel>span{background:#a6a6a6}.warn>span{padding-left:14px;background:linear-gradient(#e0a030,#e0a030) 0 2px/4px 4px no-repeat}
.vs{flex:0 0 12px;display:flex;flex-direction:column;align-items:center;justify-content:space-between;padding:3px 0}.vs b{width:10px;height:143px;background:#d5d5d5}.vs em{flex:1}
.hs{display:flex;align-items:center;height:12px;gap:1px;padding:0 1px;background:#fff}.hs b{height:9px;background:#d8d8d8}
.list{background:#fff;flex:89 1 0;margin-top:5px;display:flex;flex-direction:column;padding:0 1px}
table{flex:1;width:100%;border-collapse:collapse;table-layout:fixed}td,th{padding:0;border-bottom:1px solid #b9b9b9}th{font-weight:400;text-align:right;padding-right:3px;height:17px}td:first-child{border-right:1px solid #e6cccc}td{height:13px}tr.g td{background:#a6a6a6}tr.y td{background:#ffffe6}tr.e td{background:#e1fde1}tr.k td{height:5px}`,
`<h1>ОБЛАСТЬ ИНСТРУМЕНТОВ</h1><div class="bar">${ib('vie')}${ib('ref')}<span class="sp"></span>${ib('hie')}${ib('new')}<button class="q">?</button></div>
<label><select aria-label="Представление"><option>Главное представление</option></select>${ch(180)}</label>
<div class="tree"><div class="mid"><ul role="tree">${T.map(([l,e,i,x,c=''])=>`<li style="--l:${l}" class="${c}"><i class="${e?'':'n'}">${e==='-'?'−':e}</i>${ic(i)}<span>${x}</span></li>`).join('')}</ul><div class="vs">${ch(0)}<b></b><em></em>${ch(180)}</div></div><div class="hs">${ch(-90)}<b style="flex:195;margin-left:2px"></b><b style="flex:22;background:none"></b>${ch(90)}<b style="width:12px;background:none"></b></div></div>
<div class="list"><table><colgroup><col style="width:68%"><col></colgroup><tr><th colspan="2">Статус ссылки на ...</th></tr><tr><td></td><td></td></tr><tr class="g"><td></td><td></td></tr><tr class="y"><td></td><td></td></tr><tr class="e"><td></td><td></td></tr><tr class="e k"><td></td><td></td></tr></table><div class="hs">${ch(-90)}<b style="flex:143;background:none"></b><b style="flex:87"></b>${ch(90)}</div></div>`);

const vt=(a,on)=>a.map(([x,g],i)=>`<button class="vt ${i===on?'on':''}" style="flex:${g} 1 0"><span>${x}</span></button>`).join('');
const vtCss=`.vt{width:100%;min-height:0;border:1px solid #333;border-radius:0 3px 3px 0;background:#4a4a4a;color:#b8b8b8}.vt span{writing-mode:vertical-rl;transform:rotate(180deg)}.vt.on{background:#575757;color:#fff;font-weight:700}`;
reg('side-tabs',`:host{display:flex;flex-direction:column;background:#565656;padding:16px 0 194px}${vtCss}`,vt([['Навигатор',80],['Параметры',81],['Съемка',81],['Панель инструмен...',80]],0));

reg('sheet-tabs',`:host{display:flex;height:20px;background:#2e2e2e;padding:1px 0 7px 8px;color:#a5a5a5}button{background:#4c4c4c;clip-path:polygon(0 0,100% 0,calc(100% - 6px) 100%,6px 100%);padding:0 10px;margin-right:-2px}.on{background:#777;color:#fff;font-weight:700;padding:0 8px}`,
`<button class="on">Модель</button><button>Лист1</button><button>Лист2</button><button aria-label="Новый лист">${ic('plus',7)}</button>`);

reg('profile-tools',`:host{display:block;box-sizing:border-box;background:#fff;border:1px solid #6a7782;color:#222;box-shadow:inset 0 0 0 2px #e9f4fb}
header{display:flex;height:20px;background:linear-gradient(#b9c9d4,#d9ebf7 30%,#eaf5fc);color:#98a4ad}header b{flex:1;font-weight:400;padding:8px 0 0 5px}
header button{height:11px;border:1px solid #8494a2;background:linear-gradient(#d8e4ee,#a8bac9);width:17px;color:#333;font-weight:700}header .x{width:25px;background:linear-gradient(#e08a80,#b8281c)}
.r{display:flex;align-items:center;height:19px;padding:0 6px 0 8px}.r>button{margin:0 2px}.r>i{width:1px;height:14px;background:#ccc;margin:0 3px}.r .d{margin:0 0 0 -3px}.r .on+.d{margin:0}
label{display:flex;align-items:center;flex:1;height:14px;border:1px solid #999;padding:0 3px 0 1px;margin:0 3px 0 1px}select{flex:1;padding-left:3px}.r .on{background:#cfe4f4;border:1px solid #aaa;margin-right:0}
footer{display:flex;height:17px;align-items:center;padding:0 6px 4px;color:#111}footer span{flex:218}footer span+span{flex:217}`,
`<header><b>Инструменты профилирования</b><button aria-label="Прозрачность">${ic('tr2',9)}</button><button aria-label="Справка">?</button><button class="x" aria-label="Закрыть">${ic('x',10)}</button></header>
<div class="r">${ib('bgr')}${ib('srf')}${ib('bly')}<i></i>${ib('bst')}<label>${ic('bsl')}<select aria-label="Критерий"><option>Откос 1:1.5</option></select>${ch(180)}</label>${ib('bsel','on')}${ib('ddk','d')}<i></i>${ib('bcr')}${ib('ddk','d')}${ib('bed')}${ib('ddk','d')}${ib('bcub')}${ib('ddk','d')}<i></i>${ib('bta')}${ib('btb')}<i></i>${ib('bgr')}${ib('bsl')}<i></i>${ib('bcol')}</div>
<footer><span>Группа: Откосы Планировки</span><span>Поверхность: Ч3</span></footer>`);

reg('command-line',`:host{display:flex;font:8px/10px "DejaVu Sans Mono",monospace;color:#222}
.g{flex:0 0 17px;background:linear-gradient(90deg,#868686,#606060);display:flex;flex-direction:column;align-items:center;gap:4px;padding-top:8px;border-top:1px solid #aaa}
.m{flex:1;display:flex;flex-direction:column}.h{flex:1;background:rgba(216,216,216,.68);border-top:1px solid #888;border-bottom:1px solid #888;padding:2px 0 0 1px;white-space:pre}
label{display:flex;align-items:center;height:15px;background:rgba(255,255,255,.62);padding-left:4px}input{flex:1;font-style:italic;color:#777;padding-left:5px}`,
`<div class="g">${ic('x')}<svg width="11" height="11" viewBox="0 0 12 12"><path d="M2 10l5-5c-1-3 1-4 3-4L8 3l1 1 2-2c0 3-2 4-4 3" fill="none" stroke="#fff" stroke-width="1.500"/></svg></div><div class="m"><div class="h">Команда:
Команда:  *Прервано*
Команда:</div><label><svg width="16" height="9" viewBox="0 0 16 9"><path d="M0 0h11v8H0zM2 3l2 2-2 2M6 6h3" fill="none" stroke="#555"/><path d="M12 4h4l-2 2z" fill="#555"/></svg><input aria-label="Команда" value="Введите команду"></label></div>`);

const P=[['Геометрические свойства'],['Площадь (сумма)','180.3663'],['Длина (сумма)','139.8204'],['Объем (сумма)','0.0000'],['Геометрические свойства (настройка)'],['Линейный масштабный коэффициент','1.0000'],['Информация'],['Стиль выемки','<b>Откос выемки</b>'],['<span class="hi">Стиль насыпи</span>',`<label class="e">${ic('bsl',10)}<select aria-label="Стиль насыпи"><option>Откосы насыпи</option></select><u>${ch(180)}</u></label>`],['Имя',''],['Описание',''],['Показать подсказки',''],['Общие'],['Полная палитра цветов',''],['Слой',''],['Тип линий','<s></s>ПоСлою'],['ЛМасштаб','1.0000'],['Стиль печати','<em>ПоЦвету</em>'],['Вес линий','<s></s>ПоСлою'],['Ссылка',''],['Данные'],['Имя площадки участка','<b>Вертикальная Планировка</b>'],['Группа объектов профилирования','Откосы Планировки'],['Тип объекта профилирования','<b>Критерии профилирования</b>'],['Критерии профилирования','Откос 1:1.5']];
reg('props-palette',`:host{display:flex;color:#dcdcdc}
.tabs{flex:0 0 12px;display:flex;flex-direction:column;padding:2px 0 186px}${vtCss}.tabs .vt{border-radius:3px 0 0 3px}
.p{flex:1;display:flex;background:#575757;border:2px solid #3a3a3a;min-width:0}
.m{flex:1;padding:8px 14px 0 4px;display:flex;flex-direction:column;min-width:0}
.top{display:flex;align-items:center;gap:4px;margin-right:-8px;margin-bottom:4px}.top label{flex:1;display:flex;align-items:center;height:15px;border:1px solid #3c3c3c;background:linear-gradient(#6a6a6a,#555);margin-right:4px}.top select{flex:1;padding-left:2px}.top u{border-left:1px solid #3c3c3c}
table{margin-left:4px;border-collapse:collapse;table-layout:fixed;height:331px;white-space:nowrap}
td,th{padding:0;text-align:left;font-weight:400;line-height:10px;height:12px;border-bottom:1px solid #636363}td{border-left:1px solid #636363;padding-left:2px}tr>th[scope=row]{padding-left:15px}
th.h{height:15px;padding:2px 0 0;border:0}th.h div{display:flex;justify-content:space-between;background:#3f3f3f;border:1px solid #333;font-weight:700;color:#fff;height:13px;line-height:11px;padding:0 4px}
b,.hi{color:#fff}em{font-style:normal;color:#999}s{display:inline-block;width:43px;height:1px;background:#eee;margin:0 3px 3px 0}
.e{display:flex;align-items:center;background:#fff;color:#222;height:11px;margin:0 0 0 -2px}.e select{flex:1;padding-left:3px}.e u{border:1px solid #4a9ad0;display:flex;height:11px;align-items:center}
aside{flex:0 0 12px;background:#4c4c4c;border-left:1px solid #3a3a3a;display:flex;flex-direction:column;align-items:center;gap:3px;color:#ccc}aside span{writing-mode:vertical-rl;transform:rotate(180deg);margin-top:auto}aside ui-icon{--s:10px}
aside ui-icon:last-child{margin:4px 0 1px}`,
`<div class="tabs">${vt([['Проект',80],['Отображение',80],['Дополнительно',81],['Класс объекта',81]],0)}</div>
<div class="p"><div class="m"><div class="top"><label><select aria-label="Объект"><option>Профилирование</option></select><u>${ic('dd',8)}</u></label>${ib('qs')}${ib('qa')}${ib('qf')}</div>
<table><colgroup><col style="width:168px"><col></colgroup>${P.map(r=>r.length===1?`<tr><th class="h" colspan="2"><div><span>${r[0]}</span><span>–</span></div></th></tr>`:`<tr><th scope="row">${r[0]}</th><td>${r[1]}</td></tr>`).join('')}</table></div>
<aside>${ic('x')}${ic('pin')}${ic('set')}<span>СВОЙСТВА</span>${ic('qp')}</aside></div>`);

reg('style-list',`:host{display:block;background:#fff;color:#222}ul{margin:0;padding:1px 0 0 8px;list-style:none}li{display:flex;align-items:center;height:12px;gap:2px;white-space:nowrap}li::before{content:"";width:7px;height:1px;border-bottom:1px dotted #bbb;margin-right:-2px}span{padding:0 2px}.on span{background:#0b7bd6;color:#fff;font-weight:700}`,
`<ul role="listbox">${['Откос выемки','Откосы на одном слое','Откосы насыпи','Стандартный','Создать/редактировать...'].map((x,i)=>`<li role="option" class="${i===2?'on':''}">${ic('bsl')}<span>${x}</span></li>`).join('')}</ul>`);

const ln=(a,c,w)=>`<path d="${a}" fill="none" stroke="${c}" stroke-width="${w}"/>`;
reg('model-view',`:host{display:block;position:relative;background:#cbd3d9;overflow:hidden}
svg.d{position:absolute;inset:0;width:100%;height:100%}
.lbl{position:absolute;left:4px;top:4px;color:#f4e4f4;opacity:.85}
profile-tools{position:absolute;left:75px;top:50px;width:447px}
command-line{position:absolute;left:79px;bottom:0;width:502px;height:50px}
props-palette{position:absolute;right:34px;top:18px;bottom:2px;width:349px}
style-list{position:absolute;right:55px;top:171px;width:141px;height:80px}
.cur{position:absolute;right:63px;top:169px}`,
`<svg class="d" viewBox="306 148 952 532" preserveAspectRatio="xMinYMin slice">
<path d="M313 148H452L557 435 631 631 649 680H511L493 631 420 435z" fill="#f0f"/>
${ln('M365 148L377 178M433 148L453 198','#9a0a9a',1)}
${ln('M306 173L339 260M571 148L579 170','#222',1)}${ln('M306 183L322 173','#c33',1)}
<circle cx="434" cy="660" r="33"/><circle cx="888" cy="473.500" r="32.500"/>
${ln('M385 680L468 645 580 600.500 857 487M809 534L888 502M690 582L750 558M520 652L607 617M852 615L887 613M747 680L887 623M867 653L887 637M620 540V680M621 554H723M661 598V633M706 556V630A22.500 22.500 0 0 1 661 630M1224 335L1258 322M1237 358L1258 349M1224 652L1258 637','#222',1)}
${ln('M382 148L490 435 562 631 579 680M396 148L502 435 575 631 593 680','#1200d8',4)}
<circle cx="661" cy="567" r="32.500"/>
${ln('M846.500 148L839 435 834 631 832 680','#d8060e',4)}${ln('M1229 148L1223 420','#d33',1)}
${ln('M527 148L495 198','#2a3fe0',1.500)}
${ln('M497 197L503 198 539 255 583 328 652 438 717 545 730 563 753 631 772 680','#9a90e0',2.200)}
${ln('M497 197L503 198 539 255 583 328 652 438 717 545 730 563 753 631 772 680','#5a1a78',1.200)}
${ln('M477 148L496 197 585 435 616 518 633 568 659 631 676 680','#6a86ff',5.500)}${ln('M477 148L496 197 585 435 616 518 633 568 659 631 676 680','#0a14dc',4)}
${ln('M527 280L539 276M550 340L583 328M573 400L595 392M595 460L652 438M617 519L651 507M637 581L722 550M663 638L703 624M737 680L767 668','#6a1a80',1.600)}
<path d="M319 634V668H352M316 665h6v6h-6z" fill="none" stroke="#222"/><text x="320" y="631" font-size="12" font-family="Lato" fill="#222">Y</text><text x="355" y="667" font-size="13" font-family="Lato" fill="#222">X</text></svg>
<span class="lbl">[−][Сверху][2D-каркас]</span>
<profile-tools></profile-tools><command-line></command-line><props-palette></props-palette><style-list></style-list>
<svg class="cur" width="8" height="12" viewBox="0 0 8 12"><path d="M.5.5v9l2-2 1.500 4 1.500-1-1.500-3h3z" fill="#fff" stroke="#444"/></svg>`);

reg('status-bar',`:host{display:flex;height:20px;align-items:center;justify-content:space-between;background:#4f4f4f;border-top:2px solid #333;color:#fff;padding:0 3px 0 2px}
span,b{white-space:nowrap}b{font:400 8px/10px Roboto,sans-serif}.r{color:#e04a2a;font-size:6px;font-weight:700}i{width:1px;height:16px;background:#2f2f2f}
.on{background:#5a9bd0;width:15px;height:15px}.sm{margin:0 -3px}b.g{margin:0 3px}`,
`<b>1:1000</b>${ib('dd','sm')}<span class="r">ПИК</span><span>ГП</span><i></i><b>-963.8839, -14181.7610, 0.0000</b><i></i><b>МОДЕЛЬ</b><i></i>`+
'gline gdots dd | msn *dyn ort pol dd iso2 dd | otr *osnp dd *lw *trn selc sc3 dd | ducs fltr dd *giz dd | *anp ann ann'.split(' ').map(n=>n==='|'?'<i></i>':n[0]==='*'?ib(n.slice(1),'on'):ib(n,n==='dd'?'sm':'')).join('')+
`<b>1:1000</b>${ib('dd','sm')}<i></i>${ib('gear')}${ib('dd','sm')}<i></i>${ib('plus')}<i></i>${ib('rul')}<span>Десятичные</span>${ib('dd','sm')}<i></i>${ib('qp')}<i></i>${ib('lkui')}${ib('dd','sm')}<i></i>${ib('el')}${ib('el')}<b class="g">1.4000</b><b class="g">1.4000</b>${ib('iso3')}${ib('hw','on')}${ib('gs')}${ib('pic')}<i></i>${ib('full')}${ib('burg')}`);

reg('task-bar',`:host{display:flex;height:20px;background:#20262b;color:#fff;align-items:stretch;padding-right:5px}
.a button{width:20px;margin-right:4px;border-bottom:2px solid transparent}.a{display:flex;flex:0 0 322px;justify-content:space-between;padding-left:2px}.a .r{border-color:#76b9ed}.a .on{background:#495057;border-color:#76b9ed}.sp{flex:1}.t{display:flex;align-items:center;gap:4px}.t span{margin-left:4px}.t span+span{margin:0 11px 0 5px}`,
`<div class="a">${['win','mgl','tv'].map(n=>ib(n)).join('')}${['gm','fld','acad','tgm','pc','wrd','chr','pdf','hrt','ml'].map(n=>ib(n,n==='acad'?'on':'r')).join('')}</div><span class="sp"></span><div class="t">${['tr1','tr2','mic','nv','usb','key','wa','nv2','cub2','six','mon','vol'].map(n=>ib(n)).join('')}<span>РУС</span><span>14:08</span>${ib('ntf')}</div>`);

reg('cad-app',`:host{display:flex;flex-direction:column;height:100vh;min-height:640px}
.head{display:flex}.logo{flex:0 0 28px;flex-direction:column;background:linear-gradient(#9a9a9a,#5e5e5e);border:1px solid #333;color:#111;font:700 6px/6px Lato}
.logo+div{flex:1;min-width:0}
main{flex:1;display:flex;min-height:0}.left{flex:0 0 266px;display:flex}.left tool-space{flex:1}.left side-tabs{flex:0 0 13px}
.t{flex:0 0 19px;display:flex;flex-direction:column;background:#565656;padding-left:1px}.t tool-strip{flex:1}
.c1{padding-bottom:30px}.c2{padding-bottom:5px}.c3{flex-basis:22px;padding:0 3px 111px 2px}
model-view{flex:1;border-left:1px solid #444}.foot{display:flex}.foot sheet-tabs{flex:0 0 264px}.foot status-bar{flex:1;min-width:0}`,
`<div class="head"><button class="logo" aria-label="Меню приложения"><svg width="20" height="19" viewBox="0 0 20 18"><path d="M1 17L8 1h4l6 16h-5l-1-4H8c-2 1-3 2-3 4z" fill="#1f8fb8"/><path d="M8 10l2-6 1.500 6z" fill="#c9dfe8"/><path d="M1 17c3-5 8-7 13-7l1 3c-5-1-8 1-10 4z" fill="#0d5f85"/></svg>C3D</button><div><title-bar></title-bar><menu-bar></menu-bar></div></div>
<cad-ribbon></cad-ribbon><doc-tabs></doc-tabs><main-tools></main-tools>
<main><div class="left"><tool-space></tool-space><side-tabs></side-tabs></div>
<div class="t c1"><tool-strip vertical icons="line dline pline pent rect arc circ cloud spl ell earc ins blk dots hat grad reg tab A addp / abc Ab Ap abc2 / gr2 sel | hat chip mapz pul | gsq | dotc"></tool-strip></div>
<div class="t c2"><tool-strip vertical icons="era cpo mir off arr mov rot sca str trim ext brk brk2 joi chf flt bld exp / ord | eh ep es ea | tg blo tgg syn brm / lnk lnc par pas web tgb"></tool-strip></div>
<model-view></model-view>
<div class="t c3"><tool-strip vertical icons="sn1 sn2 sn3 sn4 bld1 sph gl os osa osk os sn1 pkr | osk | mag mag2 os | ax ax2 hb dl ball wr arcb / osk bld1 os"></tool-strip></div></main>
<div class="foot"><sheet-tabs></sheet-tabs><status-bar></status-bar></div><task-bar></task-bar>`);
</script>
</body>
</html>
